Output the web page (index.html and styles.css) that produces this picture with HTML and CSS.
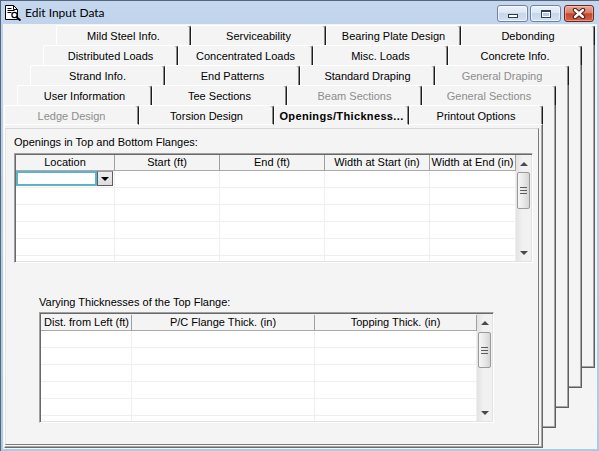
FILE: index.html
```html
<!DOCTYPE html>
<html>
<head>
<meta charset="utf-8">
<title>Edit Input Data</title>
<link rel="stylesheet" href="styles.css">
</head>
<body>
<div class="window">
  <div class="titlebar">
    <svg class="app-icon" width="17" height="17" viewBox="0 0 17 17">
      <path d="M0.5 1.5 H8.5 L12.5 5.5 V15.5 H0.5 Z" fill="#fff" stroke="#000"/>
      <path d="M8.5 1.5 V5.5 H12.5" fill="none" stroke="#000"/>
      <path d="M2.5 4.5 H6.5 M2.5 6.5 H9.5 M2.5 8.5 H6.5" stroke="#000"/>
      <circle cx="9.5" cy="11" r="2.6" fill="#fff" stroke="#000" stroke-width="1.2"/>
      <path d="M11.4 12.9 L15.5 16.5" stroke="#000" stroke-width="2"/>
    </svg>
    <span class="title">Edit Input Data</span>
    <div class="caption">
      <div class="cbtn"><span class="min-glyph"></span></div>
      <div class="cbtn"><span class="max-glyph"></span></div>
      <div class="cbtn close">
        <svg width="14" height="11" viewBox="0 0 14 11">
          <path d="M3 2 L11 9 M11 2 L3 9" stroke="#4a1c14" stroke-width="4.4" stroke-linecap="round"/>
          <path d="M3 2 L11 9 M11 2 L3 9" stroke="#fff" stroke-width="2.4" stroke-linecap="round"/>
        </svg>
      </div>
    </div>
  </div>

  <div class="client">
    <div class="tabstack">
      <div class="page p0">
        <div class="tabrow">
          <div class="tab">Mild Steel Info.</div>
          <div class="tab">Serviceability</div>
          <div class="tab">Bearing Plate Design</div>
          <div class="tab">Debonding</div>
        </div>
        <div class="pagebody"></div>
      </div>
      <div class="page p1">
        <div class="tabrow">
          <div class="tab">Distributed Loads</div>
          <div class="tab">Concentrated Loads</div>
          <div class="tab">Misc. Loads</div>
          <div class="tab">Concrete Info.</div>
        </div>
        <div class="pagebody"></div>
      </div>
      <div class="page p2">
        <div class="tabrow">
          <div class="tab">Strand Info.</div>
          <div class="tab">End Patterns</div>
          <div class="tab">Standard Draping</div>
          <div class="tab dis">General Draping</div>
        </div>
        <div class="pagebody"></div>
      </div>
      <div class="page p3">
        <div class="tabrow">
          <div class="tab">User Information</div>
          <div class="tab">Tee Sections</div>
          <div class="tab dis">Beam Sections</div>
          <div class="tab dis">General Sections</div>
        </div>
        <div class="pagebody"></div>
      </div>
      <div class="page p4 front">
        <div class="tabrow">
          <div class="tab dis">Ledge Design</div>
          <div class="tab">Torsion Design</div>
          <div class="tab active">Openings/Thickness...</div>
          <div class="tab">Printout Options</div>
        </div>
        <div class="frontbody">
          <div class="panel">
            <div class="lbl lbl1">Openings in Top and Bottom Flanges:</div>
            <div class="grid g1">
              <div class="gcols">
                <div class="ghead">
                  <div class="hc">Location</div>
                  <div class="hc">Start (ft)</div>
                  <div class="hc">End (ft)</div>
                  <div class="hc">Width at Start (in)</div>
                  <div class="hc">Width at End (in)</div>
                </div>
                <div class="gbody">
                  <div class="grow">
                    <div class="gc"><div class="combo"><div class="combo-text"></div><div class="combo-btn"><span class="arr-down"></span></div></div></div>
                    <div class="gc"></div><div class="gc"></div><div class="gc"></div><div class="gc"></div>
                  </div>
                  <div class="grow"><div class="gc"></div><div class="gc"></div><div class="gc"></div><div class="gc"></div><div class="gc"></div></div>
                  <div class="grow"><div class="gc"></div><div class="gc"></div><div class="gc"></div><div class="gc"></div><div class="gc"></div></div>
                  <div class="grow"><div class="gc"></div><div class="gc"></div><div class="gc"></div><div class="gc"></div><div class="gc"></div></div>
                  <div class="grow"><div class="gc"></div><div class="gc"></div><div class="gc"></div><div class="gc"></div><div class="gc"></div></div>
                  <div class="grow"><div class="gc"></div><div class="gc"></div><div class="gc"></div><div class="gc"></div><div class="gc"></div></div>
                </div>
              </div>
              <div class="vscroll">
                <div class="sbtn"><span class="arr-up"></span></div>
                <div class="thumb"><span class="grip"></span></div>
                <div class="strack"></div>
                <div class="sbtn"><span class="arr-down"></span></div>
              </div>
            </div>

            <div class="lbl lbl2">Varying Thicknesses of the Top Flange:</div>
            <div class="grid g2">
              <div class="gcols">
                <div class="ghead">
                  <div class="hc left">Dist. from Left (ft)</div>
                  <div class="hc">P/C Flange Thick. (in)</div>
                  <div class="hc">Topping Thick. (in)</div>
                </div>
                <div class="gbody">
                  <div class="grow"><div class="gc"></div><div class="gc"></div><div class="gc"></div></div>
                  <div class="grow"><div class="gc"></div><div class="gc"></div><div class="gc"></div></div>
                  <div class="grow"><div class="gc"></div><div class="gc"></div><div class="gc"></div></div>
                  <div class="grow"><div class="gc"></div><div class="gc"></div><div class="gc"></div></div>
                  <div class="grow"><div class="gc"></div><div class="gc"></div><div class="gc"></div></div>
                  <div class="grow"><div class="gc"></div><div class="gc"></div><div class="gc"></div></div>
                </div>
              </div>
              <div class="vscroll">
                <div class="sbtn"><span class="arr-up"></span></div>
                <div class="thumb t2"><span class="grip"></span></div>
                <div class="strack"></div>
                <div class="sbtn"><span class="arr-down"></span></div>
              </div>
            </div>
          </div>
        </div>
      </div>
    </div>
  </div>
</div>
</body>
</html>
```

FILE: styles.css
```css
* { box-sizing: border-box; }

html, body {
  margin: 0;
  padding: 0;
}

body {
  width: 599px;
  height: 451px;
  overflow: hidden;
  background: #bfd3ea;
  font-family: "Liberation Sans", Arial, sans-serif;
  font-size: 11px;
  color: #000;
}

/* ---------- window frame ---------- */
.window {
  width: 599px;
  height: 451px;
  display: flex;
  flex-direction: column;
  border-top: 1px solid #56667c;
  border-left: 1px solid #56667c;
  padding: 0 2px 2px 2px;
  background: linear-gradient(to bottom, #c4d7ee 0, #bed2ea 40px, #aacbe6 100%);
}

.titlebar {
  height: 23px;
  flex: none;
  display: flex;
  align-items: center;
}

.app-icon {
  margin-left: 2px;
  flex: none;
}

.title {
  margin-left: 3px;
  font-family: Lato, "Open Sans", sans-serif;
  font-size: 12px;
  color: #000;
  white-space: nowrap;
}

.caption {
  margin-left: auto;
  margin-right: 3px;
  align-self: flex-start;
  margin-top: 4px;
  display: flex;
  gap: 2px;
}

.cbtn {
  width: 31px;
  height: 17px;
  border: 1px solid #6f84a0;
  border-radius: 3px;
  background: linear-gradient(to bottom, #edf3fb 0%, #dae6f4 45%, #c6d7ed 50%, #d2e0f2 100%);
  box-shadow: inset 0 0 0 1px rgba(255, 255, 255, 0.6);
  display: flex;
  justify-content: center;
  align-items: flex-start;
}

.cbtn.close {
  width: 30px;
  margin-left: 1px;
  border-color: #6b2a20;
  background: linear-gradient(to bottom, #eaa896 0%, #dc7d66 45%, #c8452d 52%, #d2614a 100%);
  box-shadow: inset 0 0 0 1px rgba(255, 220, 210, 0.45);
  align-items: center;
}

.min-glyph {
  margin-top: 8px;
  width: 10px;
  height: 4px;
  border: 1px solid #2f3d50;
  background: #fff;
}

.max-glyph {
  margin-top: 4px;
  width: 10px;
  height: 8px;
  border: 1px solid #2f3d50;
  border-top-width: 2px;
  background: #b7c9e0;
  box-shadow: inset 0 0 0 1px #fff;
}

/* ---------- client ---------- */
.client {
  flex: 1;
  background: #f4f4f4;
  display: flex;
  flex-direction: column;
}

.tabstack {
  margin: 1px 0 0 1px;
  width: 591px;
  height: 423px;
  display: grid;
  grid-template-columns: 1fr;
  grid-template-rows: 1fr;
}

.page {
  grid-area: 1 / 1;
  width: 539px;
  height: 343px;
  display: flex;
  flex-direction: column;
  justify-self: start;
  align-self: start;
}

.p0 { margin-left: 52px; }
.p1 { margin-left: 39px; margin-top: 20px; }
.p2 { margin-left: 26px; margin-top: 40px; }
.p3 { margin-left: 13px; margin-top: 60px; }
.p4 { margin-left: 0; margin-top: 80px; }

.tabrow {
  height: 20px;
  flex: none;
  display: flex;
}

.tab {
  flex: none;
  width: 135px;
  height: 20px;
  background: #f4f4f4;
  border-top: 1px solid #fff;
  border-left: 1px solid #fff;
  border-right: 1px solid #1c1c1c;
  border-top-left-radius: 2px;
  border-top-right-radius: 3px;
  box-shadow: inset -1px 0 #8a8a8a;
  padding-top: 3px;
  line-height: 14px;
  text-align: center;
  white-space: nowrap;
  overflow: hidden;
}

.tab:last-child { width: 134px; }

.tab.dis { color: #8d8d8d; }

.front .tab { border-bottom: 1px solid #fff; }

.tab.active {
  font-weight: bold;
  letter-spacing: 0.35px;
  border-bottom-color: #f4f4f4;
}

.pagebody {
  flex: 1;
  background: #f4f4f4;
  border-right: 1px solid #5e5e5e;
  border-bottom: 1px solid #5e5e5e;
  box-shadow: inset -1px -1px #a4a4a4;
}

/* ---------- front page ---------- */
.frontbody {
  flex: 1;
  display: flex;
  flex-direction: column;
  background: #f4f4f4;
  border-left: 1px solid #fff;
  border-right: 1px solid #6a6a6a;
  border-bottom: 1px solid #6a6a6a;
  box-shadow: inset -1px -1px #a8a8a8;
  padding: 3px 3px 2px 0;
}

.panel {
  flex: 1;
  display: flex;
  flex-direction: column;
  align-items: flex-start;
  border-top: 1px solid #d6d6d6;
  border-left: 1px solid #e4e4e4;
  border-right: 1px solid #7c7c7c;
  border-bottom: 1px solid #7c7c7c;
}

.lbl {
  line-height: 13px;
  white-space: nowrap;
}

.lbl1 { margin: 7px 0 0 8px; }
.lbl2 { margin: 33px 0 0 33px; }

/* ---------- grids ---------- */
.grid {
  flex: none;
  display: flex;
  background: #fff;
  border-style: solid;
  border-width: 1px;
  border-color: #a0a0a0 #fff #fff #a0a0a0;
  padding: 1px;
  box-shadow: inset 1px 1px #696969, inset -1px -1px #e3e3e3;
}

.g1 { width: 519px; height: 110px; margin: 4px 0 0 8px; }
.g2 { width: 455px; height: 111px; margin: 3px 0 0 33px; }

.gcols {
  flex: none;
  display: flex;
  flex-direction: column;
  overflow: hidden;
}

.g1 .gcols { width: 500px; }
.g2 .gcols { width: 436px; }

.ghead, .grow { display: grid; }

.g1 .ghead, .g1 .grow { grid-template-columns: 99px 105px 105px 105px 86px; }
.g2 .ghead, .g2 .grow { grid-template-columns: 91px 183px 162px; }

.ghead {
  flex: none;
  height: 16px;
  background: #f4f4f4;
  border-bottom: 1px solid #a9a9a9;
}

.g2 .ghead {
  height: 17px;
  padding-top: 1px;
}

.hc {
  border-right: 1px solid #a0a0a0;
  line-height: 15px;
  text-align: center;
  white-space: nowrap;
  overflow: hidden;
}

.hc.left {
  text-align: left;
  padding-left: 3px;
}

.gbody {
  flex: 1;
  overflow: hidden;
}

.grow {
  height: 17px;
  border-bottom: 1px solid #efefef;
}

.gc {
  border-right: 1px solid #efefef;
}

.combo {
  display: flex;
  height: 15px;
}

.combo-text {
  width: 81px;
  border: 2px solid #5db4c8;
  background: #fff;
}

.combo-btn {
  width: 16px;
  border: 1px solid #5e5e5e;
  border-top-color: #9a9a9a;
  background: linear-gradient(to bottom, #eeeeee, #dddddd);
  display: flex;
  align-items: center;
  justify-content: center;
}

.combo-btn .arr-down { border-top-color: #000; }

/* ---------- scrollbar ---------- */
.vscroll {
  width: 15px;
  flex: none;
  display: flex;
  flex-direction: column;
  background: linear-gradient(to right, #e3e3e3, #f1f1f1 45%, #f1f1f1);
}

.sbtn {
  height: 17px;
  flex: none;
  display: flex;
  align-items: center;
  justify-content: center;
}

.thumb {
  flex: none;
  height: 37px;
  margin: 0 1px;
  border: 1px solid #9a9a9a;
  border-radius: 2px;
  background: linear-gradient(to right, #f6f6f6, #e8e8e8 50%, #d5d5d5);
  display: flex;
  align-items: center;
  justify-content: center;
}

.thumb.t2 { margin-top: 1px; height: 36px; }

.grip {
  width: 7px;
  height: 7px;
  border-top: 1px solid #5c5c5c;
  border-bottom: 1px solid #5c5c5c;
  background: linear-gradient(#5c5c5c, #5c5c5c) center / 100% 1px no-repeat;
}

.strack { flex: 1; }

.arr-up {
  width: 0;
  height: 0;
  border-left: 4px solid transparent;
  border-right: 4px solid transparent;
  border-bottom: 4px solid #4a4a4a;
}

.arr-down {
  width: 0;
  height: 0;
  border-left: 4px solid transparent;
  border-right: 4px solid transparent;
  border-top: 4px solid #4a4a4a;
}
```
